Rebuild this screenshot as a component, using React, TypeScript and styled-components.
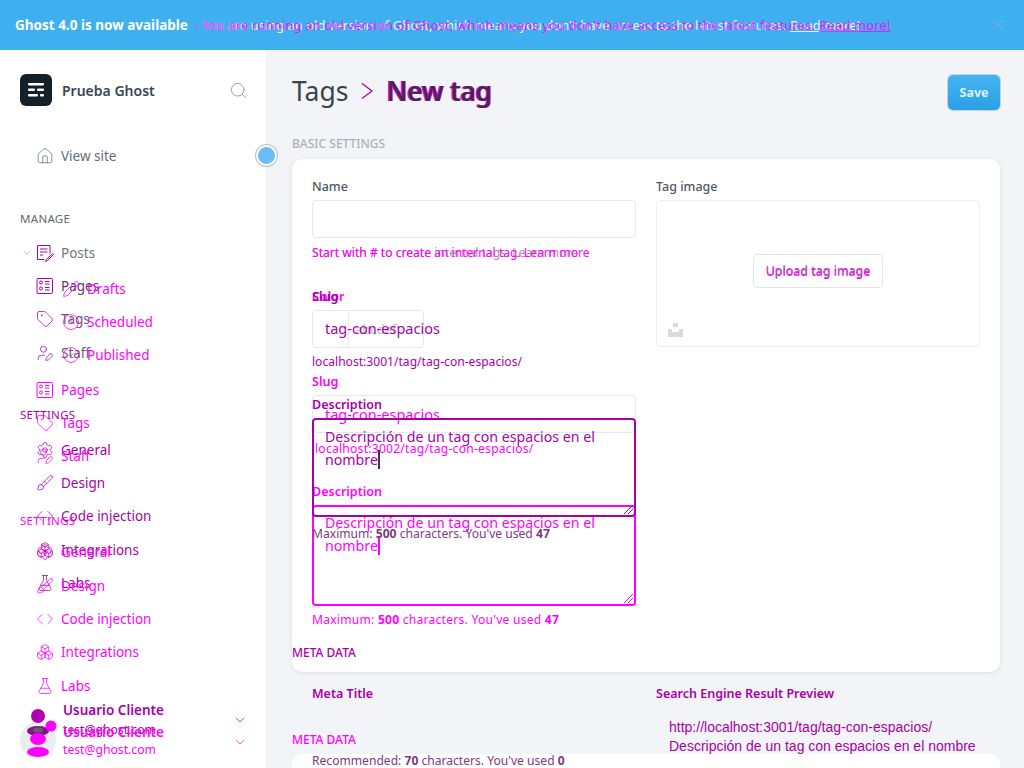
import React from 'react';
import styled, { createGlobalStyle } from 'styled-components';
import { ChevronDown, Code, FlaskConical, House, Brush, Search, Settings, Tag, UserPen, X, Boxes, Clock, CircleCheck, Pencil } from 'lucide-react';

const OLD = '#a800a8';
const NEW = '#ff00ff';
const FONT = '"Noto Sans", "Open Sans", sans-serif';

const Global = createGlobalStyle`
    html, body { margin: 0; padding: 0; background: #f3f4f7; }
    body { font-family: ${FONT}; overflow: hidden; }
    * { box-sizing: border-box; }
`;

const Page = styled.div`
    position: relative;
    width: 1024px;
    height: 768px;
    overflow: hidden;
    display: flex;
    flex-direction: column;
`;

const Banner = styled.div`
    position: relative;
    flex: none;
    height: 50px;
    background: #3eb0ef;
    display: flex;
    align-items: center;
    padding: 0 15px;
    font-size: 12.9px;
    letter-spacing: 0.05px;
    color: #e8f3f8;
    white-space: nowrap;
`;

const BannerStrong = styled.strong`
    color: #fff;
    font-size: 13.5px;
    letter-spacing: 0;
    font-weight: 700;
    margin-right: 6px;
`;

const BannerGhost = styled.div`
    position: absolute;
    left: 15px;
    top: 0;
    height: 50px;
    display: flex;
    align-items: center;
    font-size: 12.9px;
    letter-spacing: 0.19px;
    color: ${NEW};
    opacity: 0.85;
    white-space: nowrap;
`;

const Hidden = styled.span`
    visibility: hidden;
    font-size: 13.5px;
    letter-spacing: 0;
    font-weight: 700;
    margin-right: 6px;
`;

const BannerLink = styled.u`
    margin-left: 4px;
`;

const BannerClose = styled.span`
    position: absolute;
    right: 18px;
    top: 17px;
    display: flex;
    color: #b6a9c9;
`;

const Body = styled.div`
    flex: 1;
    display: flex;
    min-height: 0;
`;

const Sidebar = styled.aside`
    position: relative;
    flex: none;
    width: 267px;
    background: #fff;
    border-right: 1px solid #eff0f4;
    padding: 24px 20px 0;
    display: flex;
    flex-direction: column;
`;

const Brand = styled.div`
    display: flex;
    align-items: center;
    height: 32px;
`;

const Logo = styled.span`
    width: 32px;
    height: 32px;
    border-radius: 6px;
    background: #15212a;
    display: flex;
    align-items: center;
    justify-content: center;
`;

const BrandName = styled.span`
    margin-left: 10px;
    font-size: 14px;
    font-weight: 600;
    color: #3c4650;
    flex: 1;
`;

const SearchButton = styled.span`
    display: flex;
    color: #7d8790;
    margin-right: -2px;
`;

const Handle = styled.span`
    position: absolute;
    right: -11px;
    top: 95px;
    width: 21px;
    height: 21px;
    border-radius: 50%;
    background: #6cbcf5;
    border: 2px solid #fff;
    box-shadow: 0 0 0 1px #b9c3cc;
    z-index: 3;
`;

const ViewSite = styled.div`
    display: flex;
    align-items: center;
    height: 24px;
    margin: 38px 0 0 16px;
    gap: 7px;
    font-size: 13.5px;
    color: #626d79;
`;

const Heading = styled.div<{ $tone: string; $top: number }>`
    font-size: 11.5px;
    line-height: 16px;
    letter-spacing: 0.3px;
    margin-top: ${(p) => p.$top}px;
    color: ${(p) => p.$tone};
    text-transform: uppercase;
`;

const NavRow = styled.div<{ $tone: string; $text?: string; $sub?: boolean }>`
    position: relative;
    display: flex;
    align-items: center;
    height: 33.3px;
    gap: 7px;
    font-size: 13.5px;
    padding-left: ${(p) => (p.$sub ? 42 : 16)}px;
    color: ${(p) => p.$text || p.$tone};
    white-space: nowrap;
    svg { color: ${(p) => p.$tone}; flex: none; }
`;

const RowCaret = styled.span`
    position: absolute;
    left: 2px;
    top: 12px;
    display: flex;
    color: ${OLD};
`;

const NavList = styled.div<{ $top: number }>`
    margin-top: ${(p) => p.$top}px;
`;

const NewManage = styled.div`
    margin-top: 1px;
`;

const NewNav = styled.div`
    position: absolute;
    left: 20px;
    right: 20px;
    top: 222px;
`;

const UserRow = styled.div<{ $tone: string; $top: number; $leading: number }>`
    position: absolute;
    left: 20px;
    right: 20px;
    top: ${(p) => p.$top}px;
    padding-left: 43px;
    color: ${(p) => p.$tone};
    font-size: 12.2px;
    line-height: ${(p) => p.$leading}px;
`;

const UserName = styled.div`
    font-size: 13.5px;
    font-weight: 600;
`;

const UserCaret = styled.span`
    position: absolute;
    right: -2px;
    top: 11px;
    display: flex;
`;

const Avatar = styled.svg`
    position: absolute;
    left: 18px;
    top: 655px;
`;

const Main = styled.main`
    position: relative;
    flex: 1;
    min-width: 0;
    padding: 0 24px 0 25px;
    overflow: hidden;
`;

const TopBar = styled.header`
    display: flex;
    align-items: center;
    justify-content: space-between;
    height: 85px;
`;

const Title = styled.h1`
    margin: -3px 0 0;
    display: flex;
    align-items: center;
    gap: 12px;
    font-size: 26.5px;
    font-weight: 400;
    color: #3a444c;
`;

const Crumb = styled.span`
    color: #3f2c4a;
    font-weight: 500;
    text-shadow: -1px 0 ${NEW}, 1px 0 #b000b0;
`;

const Arrow = styled.span`
    display: flex;
    color: #b000b0;
`;

const SaveButton = styled.button`
    width: 52px;
    height: 35px;
    border: 0;
    border-radius: 5px;
    background: linear-gradient(#45b4f0, #2b9fe6);
    box-shadow: 0 0 0 1px rgba(30, 120, 190, 0.25);
    color: #dff1fb;
    font: 700 12.5px ${FONT};
`;

const SectionTitle = styled.h2<{ $tone: string; $top?: number }>`
    margin: ${(p) => p.$top || 0}px 0 8px;
    font-size: 12px;
    line-height: 18px;
    height: 16px;
    font-weight: 500;
    text-transform: uppercase;
    color: ${(p) => p.$tone};
`;

const Card = styled.section`
    background: #fff;
    border-radius: 10px;
    box-shadow: 0 1px 4px rgba(40, 50, 80, 0.1);
    display: grid;
    grid-template-columns: 324px 324px;
    gap: 20px;
    padding: 18px 20px 44px;
`;

const Column = styled.div`
    display: flex;
    flex-direction: column;
`;

const Label = styled.label<{ $tone: string; $top?: number }>`
    font-size: 12.5px;
    line-height: 18px;
    font-weight: 600;
    padding-top: 1px;
    margin-top: ${(p) => p.$top || 0}px;
    margin-bottom: 4px;
    color: ${(p) => p.$tone};
    white-space: nowrap;
`;

const PlainLabel = styled(Label)`
    font-weight: 500;
    color: #4f5860;
`;

const Input = styled.div<{ $width?: number }>`
    height: 38px;
    width: ${(p) => (p.$width ? `${p.$width}px` : '100%')};
    border: 1px solid #e5e7eb;
    border-radius: 4px;
    background: #fff;
    display: flex;
    align-items: center;
    font-size: 14.5px;
    color: ${NEW};
    flex: none;
`;

const Swatch = styled.span`
    width: 36px;
    height: 100%;
    border-right: 1px solid #e5e7eb;
    flex: none;
`;

const SlugValue = styled.span`
    padding-left: 12px;
`;

const HexValue = styled.span`
    padding-left: 6px;
    font-size: 13px;
    color: #b9bec4;
`;

const Help = styled.p<{ $tone: string; $top?: number; $wide?: boolean }>`
    margin: ${(p) => p.$top ?? 7}px 0 0;
    font-size: 12.1px;
    line-height: 16px;
    letter-spacing: ${(p) => (p.$wide ? '0.24px' : '0')};
    color: ${(p) => p.$tone};
    white-space: nowrap;
    b { font-weight: 700; }
`;

const ShiftedHelp = styled(Help)`
    padding-left: 3px;
`;

const HelpOverlay = styled(Help)`
    position: absolute;
    left: 0;
    top: 0;
`;

const HelpWrap = styled.div`
    position: relative;
    height: 16px;
    margin-top: 7px;
    ${Help} { margin-top: 0; }
`;

const Area = styled.div<{ $tone: string; $height: number; $pad: number }>`
    position: relative;
    height: ${(p) => p.$height}px;
    border: 2px solid ${(p) => p.$tone};
    border-radius: 4px;
    padding: ${(p) => p.$pad}px 11px;
    font-size: 14.2px;
    line-height: 23px;
    color: ${(p) => p.$tone};
`;

const Caret = styled.span<{ $tone: string }>`
    display: inline-block;
    width: 2px;
    height: 19px;
    background: ${(p) => p.$tone};
    vertical-align: -4px;
`;

const Grip = styled.svg`
    position: absolute;
    right: 0;
    bottom: 0;
`;

const ImageBox = styled.div`
    position: relative;
    height: 147px;
    border: 1px solid #eceef1;
    border-radius: 4px;
    display: flex;
    align-items: center;
    justify-content: center;
`;

const UploadButton = styled.button`
    width: 130px;
    height: 34px;
    margin-top: -6px;
    background: #fff;
    border: 1px solid #e3e5e8;
    border-radius: 4px;
    font: 12.5px ${FONT};
    color: #b84cb8;
    text-shadow: 0 1px ${NEW};
`;

const Unsplash = styled.svg`
    position: absolute;
    left: 11px;
    bottom: 9px;
`;

const NewCardStart = styled.section`
    height: 40px;
    margin-top: -1px;
    background: #fff;
    border-radius: 10px 10px 0 0;
`;

const OldLayer = styled.div`
    position: absolute;
    left: 25px;
    top: 237px;
    width: 708px;
`;

const OldForm = styled.div`
    width: 324px;
    margin-left: 20px;
    display: flex;
    flex-direction: column;
`;

const OldValue = styled.div`
    font-size: 14.5px;
    line-height: 23px;
    color: ${OLD};
    margin: 7px 0 0 13px;
`;

const OldMeta = styled.div`
    display: grid;
    grid-template-columns: 324px 324px;
    gap: 20px;
    margin-left: 20px;
`;

const SerpUrl = styled.div`
    margin: 11px 0 0 13px;
    font: 14px/19px "Liberation Sans", Arial, sans-serif;
    color: ${OLD};
    white-space: nowrap;
`;

const icon = { size: 18, strokeWidth: 1 };

const PostsIcon = () => (
    <svg width="18" height="18" viewBox="0 0 18 18" fill="none" stroke="currentColor">
        <path d="M1.5 1.5h12.5v8M1.5 1.5v14h7M4 5h7.5M4 8h7.5M4 11h3" />
        <path d="M16.5 9.5l-6 6-1 2 2-1 6-6z" />
    </svg>
);

const PagesIcon = () => (
    <svg width="18" height="18" viewBox="0 0 18 18" fill="none" stroke="currentColor">
        <rect x="1" y="1.5" width="15.5" height="15" rx="1" />
        <circle cx="5" cy="5.5" r="1.5" />
        <circle cx="5" cy="11.5" r="1.5" />
        <path d="M9 4.5h4.5M9 7h4.5M9 10.500h4.500M9 13h4.500" />
    </svg>
);

const GripLines = ({ tone }: { tone: string }) => (
    <Grip width="11" height="11" viewBox="0 0 11 11" stroke={tone}>
        <path d="M1 10l9-9M5 10l5-5" />
    </Grip>
);

type Item = { name: string; node: React.ReactNode; text?: string };

const oldManage: Item[] = [
    { name: 'Posts', node: <PostsIcon />, text: '#6f7780' },
    { name: 'Pages', node: <PagesIcon />, text: '#5c3768' },
    { name: 'Tags', node: <Tag {...icon} />, text: '#6d5a70' },
    { name: 'Staff', node: <UserPen {...icon} />, text: '#6d5a70' },
];

const oldSettings: Item[] = [
    { name: 'General', node: <Settings {...icon} /> },
    { name: 'Design', node: <Brush {...icon} /> },
    { name: 'Code injection', node: <Code {...icon} /> },
    { name: 'Integrations', node: <Boxes {...icon} /> },
    { name: 'Labs', node: <FlaskConical {...icon} /> },
];

const newSub: Item[] = [
    { name: 'Drafts', node: <Pencil {...icon} /> },
    { name: 'Scheduled', node: <Clock {...icon} /> },
    { name: 'Published', node: <CircleCheck {...icon} /> },
];

const newManage: Item[] = [
    { name: 'Pages', node: <PagesIcon /> },
    { name: 'Tags', node: <Tag {...icon} /> },
    { name: 'Staff', node: <UserPen {...icon} /> },
];

const App = () => (
    <Page>
        <Global />
        <Banner>
            <BannerStrong>Ghost 4.0 is now available</BannerStrong>
            - You are using an old version of Ghost, which means you don't have access to the latest features.
            <BannerLink>Read more!</BannerLink>
            <BannerGhost>
                <Hidden>Ghost 4.0 is now available</Hidden>
                - You are running an old version of Ghost, which means you don't have access to the latest features.
                <BannerLink>Read more!</BannerLink>
            </BannerGhost>
            <BannerClose><X size={16} strokeWidth={1} /></BannerClose>
        </Banner>
        <Body>
            <Sidebar>
                <Brand>
                    <Logo>
                        <svg width="18" height="16" viewBox="0 0 18 16" fill="#fff">
                            <rect x="1" y="1" width="16" height="2.500" rx="1" />
                            <rect x="1" y="6.500" width="7" height="2.500" rx="1" />
                            <rect x="10" y="6.500" width="7" height="2.500" rx="1" />
                            <rect x="1" y="12" width="10" height="2.500" rx="1" />
                            <rect x="13" y="12" width="4" height="2.500" rx="1" />
                        </svg>
                    </Logo>
                    <BrandName>Prueba Ghost</BrandName>
                    <SearchButton><Search size={19} strokeWidth={1} /></SearchButton>
                </Brand>
                <ViewSite><House size={18} strokeWidth={1} />View site</ViewSite>
                <Heading $tone="#5f6871" $top={43}>Manage</Heading>
                <NavList $top={9}>
                    {oldManage.map((item, i) => (
                        <NavRow key={item.name} $tone={OLD} $text={item.text}>
                            {i === 0 && <RowCaret><ChevronDown size={10} strokeWidth={1} /></RowCaret>}
                            {item.node}{item.name}
                        </NavRow>
                    ))}
                </NavList>
                <Heading $tone={OLD} $top={38}>Settings</Heading>
                <NavList $top={10}>
                    {oldSettings.map((item) => (
                        <NavRow key={item.name} $tone={OLD}>{item.node}{item.name}</NavRow>
                    ))}
                </NavList>
                <NewNav>
                    {newSub.map((item) => (
                        <NavRow key={item.name} $tone={NEW} $sub>{item.node}{item.name}</NavRow>
                    ))}
                    <NewManage>
                        {newManage.map((item) => (
                            <NavRow key={item.name} $tone={NEW}>{item.node}{item.name}</NavRow>
                        ))}
                    </NewManage>
                    <Heading $tone={NEW} $top={40}>Settings</Heading>
                    <NavList $top={7}>
                        {oldSettings.map((item) => (
                            <NavRow key={item.name} $tone={NEW}>{item.node}{item.name}</NavRow>
                        ))}
                    </NavList>
                </NewNav>
                <Avatar width="44" height="64" viewBox="0 0 44 64">
                    <circle cx="20" cy="35" r="18" fill="#e9edf2" />
                    <circle cx="20" cy="11" r="7" fill="#b000b0" />
                    <ellipse cx="20" cy="26" rx="11" ry="5" fill="#8a0f8a" />
                    <circle cx="33" cy="21" r="5.500" fill={NEW} />
                    <ellipse cx="20" cy="25" rx="5" ry="2.500" fill="#5a6a60" />
                    <ellipse cx="20" cy="34" rx="8" ry="6" fill={NEW} />
                    <ellipse cx="20" cy="47" rx="11" ry="5" fill={NEW} />
                </Avatar>
                <UserRow $tone={OLD} $top={651} $leading={19}>
                    <UserName>Usuario Cliente</UserName>
                    <div>test@ghost.com</div>
                    <UserCaret><ChevronDown size={16} strokeWidth={1} /></UserCaret>
                </UserRow>
                <UserRow $tone={NEW} $top={673} $leading={18}>
                    <UserName>Usuario Cliente</UserName>
                    <div>test@ghost.com</div>
                    <UserCaret><ChevronDown size={16} strokeWidth={1} /></UserCaret>
                </UserRow>
                <Handle />
            </Sidebar>
            <Main>
                <TopBar>
                    <Title>
                        Tags
                        <Arrow>
                            <svg width="14" height="18" viewBox="0 0 14 18" fill="none" stroke="currentColor" strokeWidth="1.300">
                                <path d="M2 1.500l10 7.500-10 7.500" />
                            </svg>
                        </Arrow>
                        <Crumb>New tag</Crumb>
                    </Title>
                    <SaveButton>Save</SaveButton>
                </TopBar>
                <SectionTitle $tone="#aab3bb">Basic settings</SectionTitle>
                <Card>
                    <Column>
                        <PlainLabel $tone="#4f5860">Name</PlainLabel>
                        <Input />
                        <HelpWrap>
                            <Help $tone="#a88fb0">Start with # to create internal tags. Learn more</Help>
                            <HelpOverlay $tone={NEW} $top={0}>Start with # to create an internal tag. Learn more</HelpOverlay>
                        </HelpWrap>
                        <Label $tone={NEW} $top={26}>Color</Label>
                        <Input $width={112}>
                            <Swatch />
                            <HexValue>abcdef</HexValue>
                        </Input>
                        <Label $tone={NEW} $top={24}>Slug</Label>
                        <Input><SlugValue>tag-con-espacios</SlugValue></Input>
                        <ShiftedHelp $tone={NEW} $top={8} $wide>localhost:3002/tag/tag-con-espacios/</ShiftedHelp>
                        <Label $tone={NEW} $top={25}>Description</Label>
                        <Area $tone={NEW} $height={101} $pad={4}>
                            Descripción de un tag con espacios en el nombre<Caret $tone={NEW} />
                            <GripLines tone={NEW} />
                        </Area>
                        <Help $tone={NEW} $top={6} $wide>Maximum: <b>500</b> characters. You've used <b>47</b></Help>
                    </Column>
                    <Column>
                        <PlainLabel $tone="#4f5860">Tag image</PlainLabel>
                        <ImageBox>
                            <UploadButton>Upload tag image</UploadButton>
                            <Unsplash width="15" height="14" viewBox="0 0 15 14" fill="#d9dadc">
                                <path d="M5 0h5v4H5zM0 6h4v3h7V6h4v8H0z" />
                            </Unsplash>
                        </ImageBox>
                    </Column>
                </Card>
                <SectionTitle $tone={NEW} $top={59}>Meta data</SectionTitle>
                <NewCardStart />
                <OldLayer>
                    <OldForm>
                        <Label $tone={OLD}>Slug</Label>
                        <OldValue>tag-con-espacios</OldValue>
                        <Help $tone={OLD} $top={14}>localhost:3001/tag/tag-con-espacios/</Help>
                        <Label $tone={OLD} $top={25}>Description</Label>
                        <Area $tone={OLD} $height={99} $pad={5}>
                            Descripción de un tag con espacios en el nombre<Caret $tone="#40304a" />
                            <GripLines tone={OLD} />
                        </Area>
                        <Help $tone="#7d3a7d" $top={9}>Maximum: <b>500</b> characters. You've used <b>47</b></Help>
                    </OldForm>
                    <SectionTitle $tone={OLD} $top={102}>Meta data</SectionTitle>
                    <OldMeta>
                        <Column>
                            <Label $tone={OLD} $top={16}>Meta Title</Label>
                            <Help $tone="#7d3a7d" $top={46}>Recommended: <b>70</b> characters. You've used <b>0</b></Help>
                        </Column>
                        <Column>
                            <Label $tone={OLD} $top={16}>Search Engine Result Preview</Label>
                            <SerpUrl>http://localhost:3001/tag/tag-con-espacios/<br />Descripción de un tag con espacios en el nombre</SerpUrl>
                        </Column>
                    </OldMeta>
                </OldLayer>
            </Main>
        </Body>
    </Page>
);

export default App;
